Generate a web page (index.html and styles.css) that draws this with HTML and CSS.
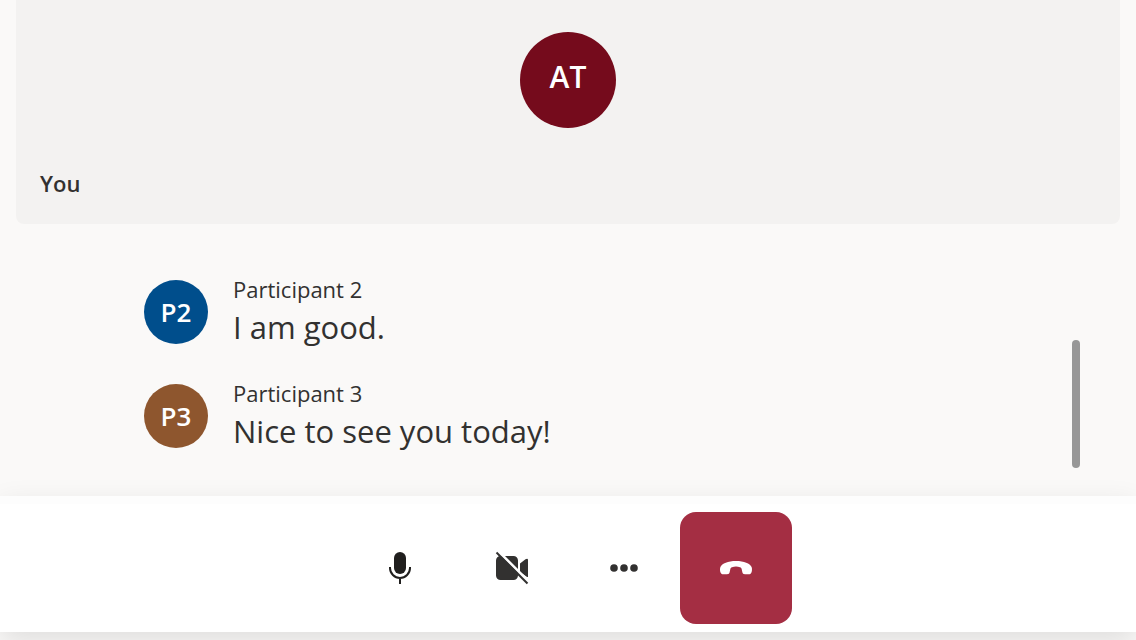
FILE: index.html
```html
<!DOCTYPE html>
<html lang="en">
<head>
<meta charset="utf-8">
<meta name="viewport" content="width=device-width, initial-scale=1">
<title>Call with captions</title>
<link rel="stylesheet" href="styles.css">
</head>
<body>
<div class="call">
  <section class="tile" aria-label="Your video">
    <div class="avatar avatar-large">AT</div>
    <div class="tile-name">You</div>
  </section>
  <main class="captions">
    <ul class="caption-list">
      <li class="caption">
        <div class="avatar avatar-blue">P2</div>
        <div class="caption-body">
          <div class="speaker">Participant 2</div>
          <div class="speech">I am good.</div>
        </div>
      </li>
      <li class="caption">
        <div class="avatar avatar-brown">P3</div>
        <div class="caption-body">
          <div class="speaker">Participant 3</div>
          <div class="speech">Nice to see you today!</div>
        </div>
      </li>
    </ul>
    <div class="scroll-thumb"></div>
  </main>
  <footer class="controls">
    <button class="control" type="button" aria-label="Mute">
      <svg class="icon" viewBox="0 0 40 40" aria-hidden="true">
        <rect x="14" y="4" width="12" height="22" rx="6" fill="#201f1e"/>
        <path d="M10 19v1a10 10 0 0 0 20 0v-1M20 30v6" fill="none" stroke="#201f1e" stroke-width="2"/>
      </svg>
    </button>
    <button class="control" type="button" aria-label="Turn camera on">
      <svg class="icon" viewBox="0 0 40 40" aria-hidden="true">
        <path d="M8.500 8h13a4.500 4.500 0 0 1 4.500 4.500v15a4.500 4.500 0 0 1-4.500 4.500H8.500a4.500 4.500 0 0 1-4.500-4.500v-15A4.500 4.500 0 0 1 8.500 8zM28 15.500l5.500-4.300Q36 10 36 12v16.500q0 1-1.600 0L28 24z" fill="#323130"/>
        <path d="M6 3l31 31" stroke="#fff" stroke-width="3"/>
        <path d="M4.500 4.500l31 31" stroke="#323130" stroke-width="2"/>
      </svg>
    </button>
    <button class="control" type="button" aria-label="More options">
      <svg class="icon" viewBox="0 0 40 40" aria-hidden="true" fill="#323130">
        <circle cx="10" cy="20" r="3.800"/><circle cx="20" cy="20" r="3.800"/><circle cx="30" cy="20" r="3.800"/>
      </svg>
    </button>
    <button class="control control-hangup" type="button" aria-label="Leave call">
      <svg class="icon" viewBox="0 0 40 40" aria-hidden="true">
        <path d="M20 13C28 13 34 15.500 35.600 19C36.300 21 36 23.500 35.200 25C34.700 26 34 26.200 32.800 26.200H29C27.200 26.200 26.700 25.600 26.300 24L25.700 21.200C25.500 20 25 19.500 24 19.200C21.500 18.400 18.500 18.400 16 19.200C15 19.500 14.500 20 14.300 21.200L13.700 24C13.300 25.600 12.800 26.200 11 26.200H7.200C6 26.200 5.300 26 4.800 25C4 23.500 3.700 21 4.400 19C6 15.500 12 13 20 13Z" fill="#fff"/>
      </svg>
    </button>
  </footer>
</div>
</body>
</html>
```

FILE: styles.css
```css
* { box-sizing: border-box; }

body {
  margin: 0;
  background: #faf9f8;
  color: #323130;
  font-family: "Segoe UI", "Open Sans", "Noto Sans", sans-serif;
}

.call {
  display: flex;
  flex-direction: column;
  min-height: 100vh;
  padding-bottom: 8px;
  overflow: hidden;
}

.tile {
  display: flex;
  flex-direction: column;
  gap: 40px;
  margin: 0 16px;
  padding: 32px 24px 26px;
  border-radius: 0 0 8px 8px;
  background: #f3f2f1;
}

.avatar {
  display: flex;
  align-items: center;
  justify-content: center;
  flex: none;
  width: 64px;
  height: 64px;
  border-radius: 50%;
  color: #fff;
  font-size: 26px;
  font-weight: 600;
}

.avatar-large {
  align-self: center;
  width: 96px;
  height: 96px;
  padding-bottom: 8px;
  background: #750b1c;
  font-size: 30px;
}

.avatar-blue { background: #004e8c; }
.avatar-brown { background: #8e562e; }

.tile-name {
  font-size: 22px;
  font-weight: 600;
  line-height: 30px;
}

.captions {
  display: flex;
  flex: 1;
  justify-content: space-between;
  align-items: flex-end;
  padding: 48px 56px 28px 144px;
}

.caption-list {
  display: flex;
  flex-direction: column;
  align-self: flex-start;
  gap: 28px;
  margin: 0;
  padding: 0;
  list-style: none;
}

.caption {
  display: flex;
  align-items: flex-start;
  gap: 25px;
}

.caption .avatar { margin-top: 8px; }

.speaker {
  font-size: 22px;
  line-height: 34px;
}

.speech {
  font-size: 31px;
  line-height: 42px;
}

.scroll-thumb {
  width: 8px;
  height: 128px;
  border-radius: 4px;
  background: #979797;
}

.controls {
  display: flex;
  justify-content: center;
  padding: 8px 0;
  border-top: 8px solid #fdfdfd;
  background: #fff;
  box-shadow: 0 10px 28px rgba(0, 0, 0, 0.11);
}

.control {
  display: flex;
  align-items: center;
  justify-content: center;
  width: 112px;
  height: 112px;
  padding: 0;
  border: 0;
  border-radius: 16px;
  background: transparent;
}

.control-hangup { background: #a42e43; }

.icon {
  width: 40px;
  height: 40px;
}
```
